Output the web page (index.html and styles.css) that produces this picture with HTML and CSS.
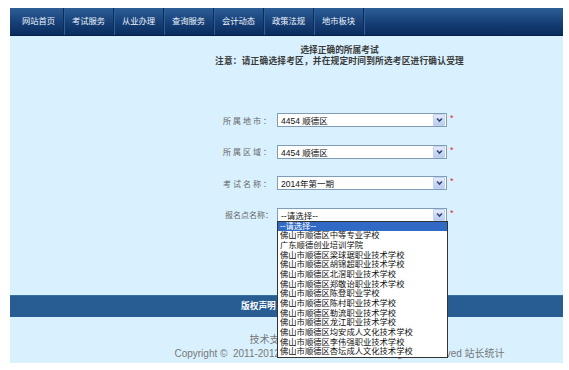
FILE: index.html
```html
<!DOCTYPE html>
<html lang="zh-CN">
<head>
    <meta charset="UTF-8">
    <title>选择正确的所属考试</title>
    <link rel="stylesheet" href="styles.css">
</head>
<body>
    <div class="page">
        <ul class="nav">
            <li>网站首页</li>
            <li>考试服务</li>
            <li>从业办理</li>
            <li>查询服务</li>
            <li>会计动态</li>
            <li>政策法规</li>
            <li>地市板块</li>
        </ul>

        <div class="content">
            <div class="main">
                <div class="notice">
                    <p class="noticeTitle">选择正确的所属考试</p>
                    <p class="noticeText">注意：请正确选择考区，并在规定时间到所选考区进行确认受理</p>
                </div>

                <div class="form">
                    <div class="row">
                        <label class="label spaced">所属地市：</label>
                        <div class="select">
                            <span class="value">4454 顺德区</span>
                            <span class="arrow"><svg width="9" height="10" viewBox="0 0 9 10"><path d="M2 3.5 L4.5 6 L7 3.5" fill="none" stroke="#33467a" stroke-width="1.6"/></svg></span>
                        </div>
                        <span class="required">*</span>
                    </div>
                    <div class="row">
                        <label class="label spaced">所属区域：</label>
                        <div class="select">
                            <span class="value">4454 顺德区</span>
                            <span class="arrow"><svg width="9" height="10" viewBox="0 0 9 10"><path d="M2 3.5 L4.5 6 L7 3.5" fill="none" stroke="#33467a" stroke-width="1.6"/></svg></span>
                        </div>
                        <span class="required">*</span>
                    </div>
                    <div class="row">
                        <label class="label spaced">考试名称：</label>
                        <div class="select">
                            <span class="value">2014年第一期</span>
                            <span class="arrow"><svg width="9" height="10" viewBox="0 0 9 10"><path d="M2 3.5 L4.5 6 L7 3.5" fill="none" stroke="#33467a" stroke-width="1.6"/></svg></span>
                        </div>
                        <span class="required">*</span>
                    </div>
                    <div class="row">
                        <label class="label">报名点名称：</label>
                        <div class="select open">
                            <span class="value">--请选择--</span>
                            <span class="arrow"><svg width="9" height="10" viewBox="0 0 9 10"><path d="M2 3.5 L4.5 6 L7 3.5" fill="none" stroke="#33467a" stroke-width="1.6"/></svg></span>
                            <ul class="dropdown">
                                <li class="selected">--请选择--</li>
                                <li>佛山市顺德区中等专业学校</li>
                                <li>广东顺德创业培训学院</li>
                                <li>佛山市顺德区梁球琚职业技术学校</li>
                                <li>佛山市顺德区胡锦超职业技术学校</li>
                                <li>佛山市顺德区北滘职业技术学校</li>
                                <li>佛山市顺德区郑敬诒职业技术学校</li>
                                <li>佛山市顺德区陈登职业学校</li>
                                <li>佛山市顺德区陈村职业技术学校</li>
                                <li>佛山市顺德区勒流职业技术学校</li>
                                <li>佛山市顺德区龙江职业技术学校</li>
                                <li>佛山市顺德区均安成人文化技术学校</li>
                                <li>佛山市顺德区李伟强职业技术学校</li>
                                <li>佛山市顺德区杏坛成人文化技术学校</li>
                            </ul>
                        </div>
                        <span class="required">*</span>
                    </div>
                </div>
            </div>
        </div>

        <div class="footerBar">
            <div class="main footerLinks">
                <span>版权声明</span>
            </div>
        </div>

        <div class="footer">
            <div class="main">
                <p>技术支持：广州市蓝达软件科技有限公司</p>
                <p>Copyright &copy; &nbsp;2011-2012 www.landasoft.com, All Rights Reserved 站长统计</p>
            </div>
        </div>
    </div>
</body>
</html>
```

FILE: styles.css
```css
body {
    margin: 0;
    padding: 8px 6px 7px 10px;
    background-color: #ffffff;
    font-family: 'Liberation Sans', 'Noto Sans CJK SC', sans-serif;
    color: #333;
}

p {
    margin: 0;
}

.page {
    width: 553px;
}

/* top navigation */
.nav {
    display: flex;
    margin: 0;
    padding: 0 0 0 4px;
    list-style: none;
    height: 27px;
    background: linear-gradient(#2d5e97, #163f76 55%, #0a2c5d);
    border-bottom: 1px solid #061f47;
}

.nav li {
    width: 49px;
    line-height: 27px;
    text-align: center;
    font-size: 8.3px;
    color: #eef3fb;
    border-right: 1px solid #0c2c5a;
    box-shadow: 1px 0 0 #2f5f97;
}

/* main light blue area */
.content {
    background: #d9f1fe;
    padding: 9px 0 73px;
}

.main {
    margin-left: 106px;
}

.notice {
    text-align: center;
    font-weight: bold;
    color: #3a3a3a;
}

.noticeTitle,
.noticeText {
    font-size: 8.7px;
    line-height: 11px;
}

.noticeText {
    letter-spacing: 0.2px;
}

.form {
    margin-top: 46px;
    display: flex;
    flex-direction: column;
    gap: 17.5px;
}

.row {
    display: flex;
    align-items: center;
    height: 14px;
}

.label {
    width: 157px;
    text-align: right;
    font-size: 8px;
    color: #666;
}

.spaced {
    letter-spacing: 2px;
}

.select {
    position: relative;
    width: 170px;
    height: 14px;
    margin-left: 4px;
    box-sizing: border-box;
    border: 1px solid #7f9db9;
    background: #fff;
    display: flex;
    align-items: center;
    justify-content: space-between;
}

.value {
    padding-left: 3px;
    font-size: 8.5px;
    color: #111;
}

.arrow {
    width: 10px;
    height: 10px;
    margin-right: 1px;
    display: flex;
    align-items: center;
    justify-content: center;
    background: linear-gradient(#e3ebfb, #b9cbf1);
    border: 1px solid #c3d2f2;
    border-radius: 1px;
}

.required {
    margin-left: 3px;
    margin-top: -4px;
    color: #e0262b;
    font-size: 9px;
}

/* open option list of the last select */
.dropdown {
    position: absolute;
    top: 100%;
    left: -1px;
    z-index: 10;
    width: 171px;
    margin: 0;
    padding: 0;
    list-style: none;
    box-sizing: border-box;
    background: #fff;
    border: 1px solid #333;
}

.dropdown li {
    height: 9.7px;
    line-height: 9.7px;
    padding-left: 2px;
    font-size: 8.3px;
    color: #111;
    white-space: nowrap;
}

.dropdown .selected {
    background: #316ac5;
    color: #fff;
}

/* footer */
.footerBar {
    background: #275d92;
    border-top: 1px solid #3a6fa3;
    height: 21px;
}

.footerLinks {
    padding-left: 125px;
    line-height: 21px;
    font-size: 8.7px;
    font-weight: bold;
    color: #fff;
}

.footer {
    background: #d9f1fe;
    padding: 16px 0 2px;
}

.footer p {
    text-align: center;
    font-size: 10px;
    line-height: 14px;
    color: #777;
}
```
